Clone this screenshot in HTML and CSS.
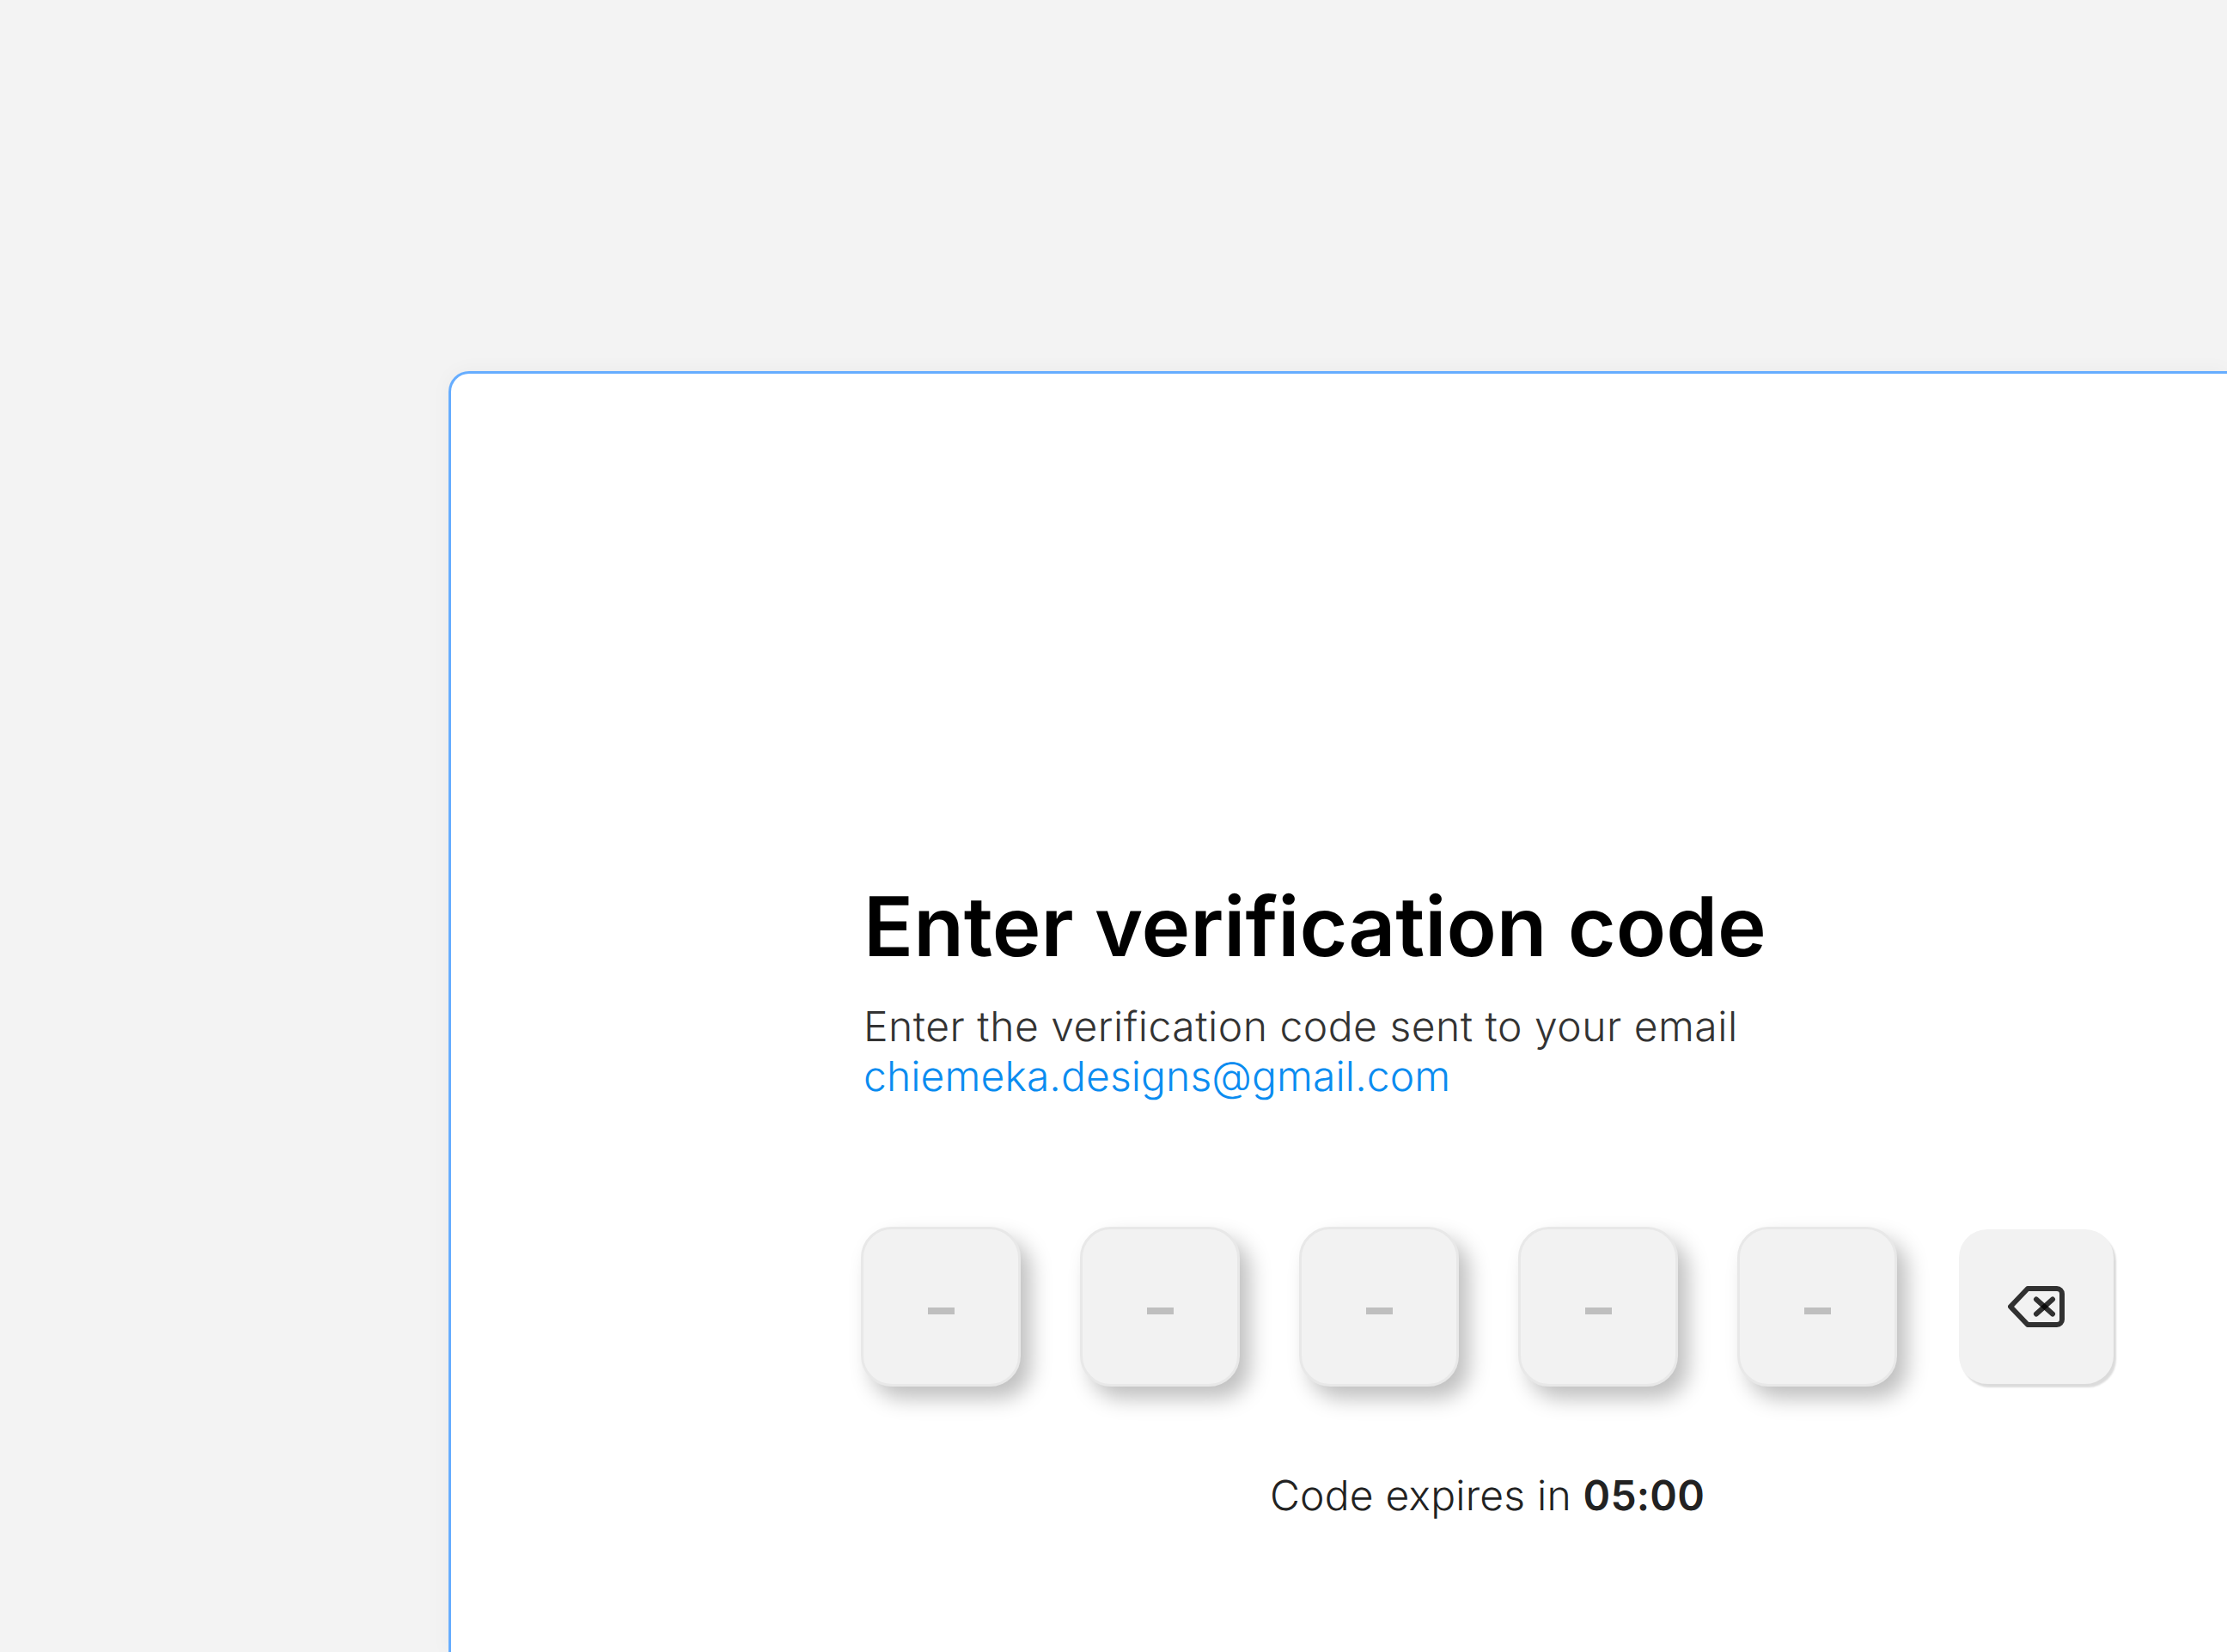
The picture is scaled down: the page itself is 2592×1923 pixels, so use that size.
FILE: index.html
```html
<!DOCTYPE html>
<html>
<head>
	<meta charset="utf-8">
	<title>Enter verification code</title>
	<link rel="stylesheet" href="styles.css">
</head>
<body>
	<div class="card">
		<div class="verify">
			<div class="verify-head">
				<h1 class="verify-title">Enter verification code</h1>
				<p class="verify-text">Enter the verification code sent to your email<br><a class="verify-email" href="#">chiemeka.designs@gmail.com</a></p>
			</div>
			<div class="keys">
				<div class="key"><span class="key-dash"></span></div>
				<div class="key"><span class="key-dash"></span></div>
				<div class="key"><span class="key-dash"></span></div>
				<div class="key"><span class="key-dash"></span></div>
				<div class="key"><span class="key-dash"></span></div>
				<div class="key-back">
					<svg class="key-icon" width="66" height="48" viewBox="0 0 66 48" fill="none" stroke="#000" stroke-opacity="0.8" stroke-width="6" stroke-linecap="round" stroke-linejoin="round">
						<path d="M23 3H57A6 6 0 0 1 63 9V39A6 6 0 0 1 57 45H23L3 24Z"/>
						<path d="M33 15.5L52 32.5"/>
						<path d="M52 15.5L33 32.5"/>
					</svg>
				</div>
			</div>
			<p class="expires">Code expires in <b class="expires-time">05:00</b></p>
		</div>
	</div>
</body>
</html>
```

FILE: styles.css
```css
html, body {
	height: 100%;
}

body {
	margin: 0;
	padding: 432px 0 0 522px;
	box-sizing: border-box;
	display: flex;
	overflow: hidden;
	background: #f3f3f3;
	font-family: "Inter", "Liberation Sans", sans-serif;
	text-rendering: geometricPrecision;
}

.card {
	flex: 1;
	box-sizing: border-box;
	padding: 587px 0 0 477px;
	background: #fff;
	border: 3px solid #66adff;
	border-right: 0;
	border-bottom: 0;
	border-top-left-radius: 24px;
	box-shadow: 0 0 24px rgba(0, 0, 0, 0.04);
}

.verify {
	width: 1458px;
}

.verify-head {
	padding-left: 3px;
}

.verify-title {
	margin: 0 0 29px;
	font-size: 96px;
	line-height: 115px;
	font-weight: 600;
	color: #000;
}

.verify-text {
	margin: 0 0 147px;
	font-size: 48px;
	line-height: 57.5px;
	font-weight: 350;
	letter-spacing: 0.5px;
	color: #333;
}

.verify-email {
	color: #0a8cf0;
	text-decoration: none;
	letter-spacing: 0.1px;
}

.keys {
	display: flex;
	align-items: center;
	gap: 69px;
}

.key {
	width: 186px;
	height: 186px;
	box-sizing: border-box;
	display: flex;
	align-items: center;
	justify-content: center;
	background: #f2f2f2;
	border: 3px solid #e8e8e8;
	border-radius: 36px;
	box-shadow: 12px 14px 24px rgba(0, 0, 0, 0.25);
}

.key-dash {
	width: 31px;
	height: 8px;
	margin-top: 9px;
	background: #bfbfbf;
}

.key-back {
	width: 180px;
	height: 180px;
	margin-left: 3px;
	display: flex;
	align-items: center;
	justify-content: center;
	background: #f2f2f2;
	border-radius: 33px;
	box-shadow: 3px 4px 2px rgba(0, 0, 0, 0.14);
}

.expires {
	margin: 98px 0 0;
	font-size: 48px;
	line-height: 57.5px;
	font-weight: 350;
	letter-spacing: 0.2px;
	text-align: center;
	color: #222;
}

.expires-time {
	font-weight: 600;
}
```
